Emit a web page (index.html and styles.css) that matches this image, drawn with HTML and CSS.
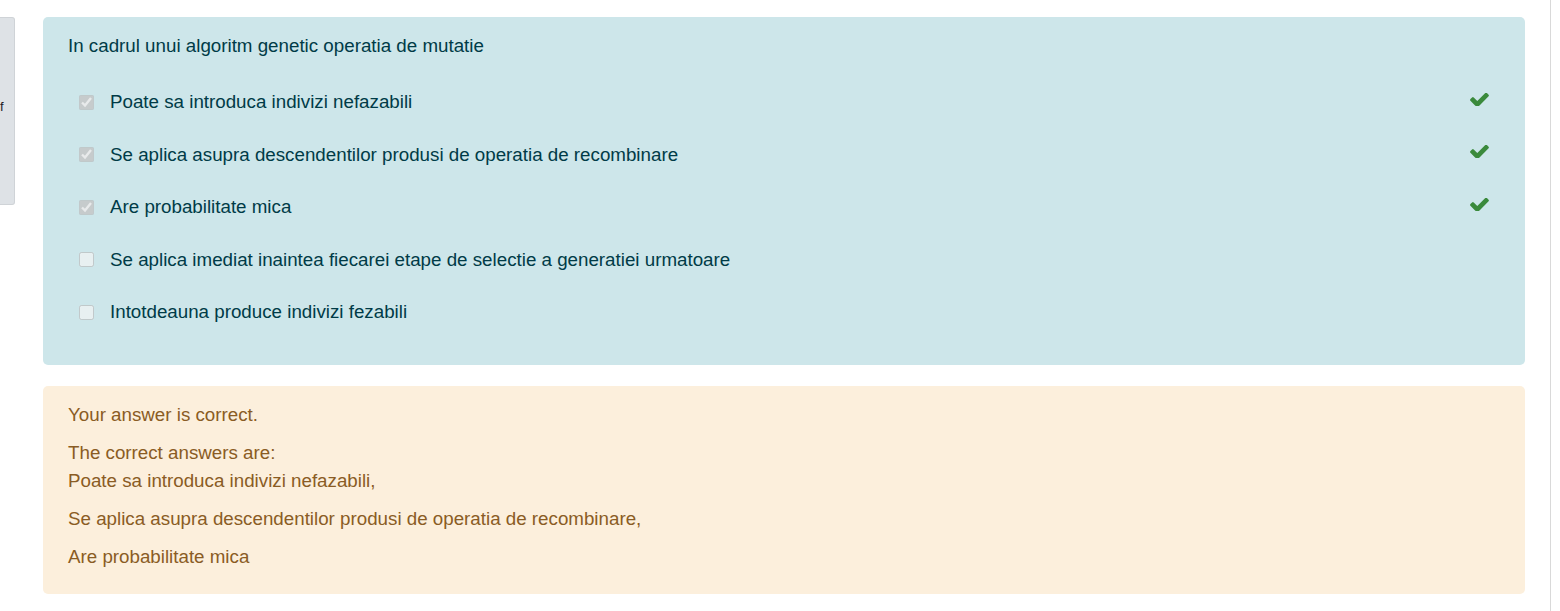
FILE: index.html
```html
<!DOCTYPE html>
<html lang="ro">
<head>
<meta charset="utf-8">
<title>Question</title>
<link rel="stylesheet" href="styles.css">
</head>
<body>
<div class="page">
  <aside class="side">
    <div class="side-panel"><span class="side-text">f</span></div>
  </aside>
  <main class="content">
    <div class="formulation">
      <div class="qtext">In cadrul unui algoritm genetic operatia de mutatie</div>
      <div class="answers">
        <div class="row">
          <input type="checkbox" class="cb" checked disabled>
          <span class="label">Poate sa introduca indivizi nefazabili</span>
          <svg class="tick" viewBox="121 360 1550 1070"><path d="M1671 566q0 40-28 68l-724 724-136 136q-28 28-68 28t-68-28l-136-136-362-362q-28-28-28-68t28-68l136-136q28-28 68-28t68 28l294 295 656-657q28-28 68-28t68 28l136 136q28 28 28 68z"/></svg>
        </div>
        <div class="row">
          <input type="checkbox" class="cb" checked disabled>
          <span class="label">Se aplica asupra descendentilor produsi de operatia de recombinare</span>
          <svg class="tick" viewBox="121 360 1550 1070"><path d="M1671 566q0 40-28 68l-724 724-136 136q-28 28-68 28t-68-28l-136-136-362-362q-28-28-28-68t28-68l136-136q28-28 68-28t68 28l294 295 656-657q28-28 68-28t68 28l136 136q28 28 28 68z"/></svg>
        </div>
        <div class="row">
          <input type="checkbox" class="cb" checked disabled>
          <span class="label">Are probabilitate mica</span>
          <svg class="tick" viewBox="121 360 1550 1070"><path d="M1671 566q0 40-28 68l-724 724-136 136q-28 28-68 28t-68-28l-136-136-362-362q-28-28-28-68t28-68l136-136q28-28 68-28t68 28l294 295 656-657q28-28 68-28t68 28l136 136q28 28 28 68z"/></svg>
        </div>
        <div class="row">
          <input type="checkbox" class="cb" disabled>
          <span class="label">Se aplica imediat inaintea fiecarei etape de selectie a generatiei urmatoare</span>
        </div>
        <div class="row">
          <input type="checkbox" class="cb" disabled>
          <span class="label">Intotdeauna produce indivizi fezabili</span>
        </div>
      </div>
    </div>
    <div class="outcome">
      <p class="feedback">Your answer is correct.</p>
      <p class="right">The correct answers are:<br>Poate sa introduca indivizi nefazabili,</p>
      <p class="right">Se aplica asupra descendentilor produsi de operatia de recombinare,</p>
      <p class="right">Are probabilitate mica</p>
    </div>
  </main>
  <div class="rail"></div>
</div>
</body>
</html>
```
FILE: styles.css
```css
html, body {
  margin: 0;
  padding: 0;
  background: #ffffff;
}
body {
  font-family: "Liberation Sans", Arial, sans-serif;
  font-size: 18.75px;
  line-height: 1.5;
  height: 611px;
  overflow: hidden;
}
.page {
  display: flex;
  height: 611px;
}
.side {
  width: 15px;
  flex: 0 0 15px;
  padding-top: 17px;
}
.side-panel {
  height: 188px;
  background: #dee2e6;
  border: 1px solid #cfd3d7;
  border-left: none;
  border-radius: 0 3px 3px 0;
  display: flex;
  align-items: center;
  overflow: hidden;
  box-sizing: border-box;
}
.side-text {
  font-size: 13px;
  line-height: 16px;
  color: #1d2125;
  margin-left: 0;
  margin-top: -8px;
}
.content {
  width: 1482px;
  flex: 0 0 1482px;
  margin-left: 28px;
  padding-top: 17px;
}
.formulation {
  background: #cde6ea;
  color: #003b47;
  border-radius: 5px;
  padding: 15px 25px 28px 25px;
  height: 348px;
  box-sizing: border-box;
}
.qtext {
  margin: 0 0 16px 0;
}
.answers {
  display: flex;
  flex-direction: column;
}
.row {
  display: flex;
  align-items: center;
  height: 52.5px;
  padding-left: 11px;
}
.cb {
  width: 15px;
  height: 15px;
  margin: 0 16px 0 0;
  flex: 0 0 auto;
}
.label {
  flex: 1 1 auto;
}
.tick {
  width: 19px;
  height: 13px;
  fill: #3a8a3c;
  margin-right: 11px;
  margin-top: -6px;
}
.outcome {
  margin-top: 21px;
  background: #fcefdc;
  color: #8a5c24;
  border-radius: 5px;
  padding: 15px 25px 24px 25px;
  height: 208px;
  box-sizing: border-box;
}
.outcome p {
  margin: 0 0 10px 0;
  line-height: 28px;
}
.outcome p:last-child {
  margin-bottom: 0;
}
.rail {
  width: 1px;
  margin-left: 25px;
  background: #d9d9d9;
  height: 611px;
}
```
